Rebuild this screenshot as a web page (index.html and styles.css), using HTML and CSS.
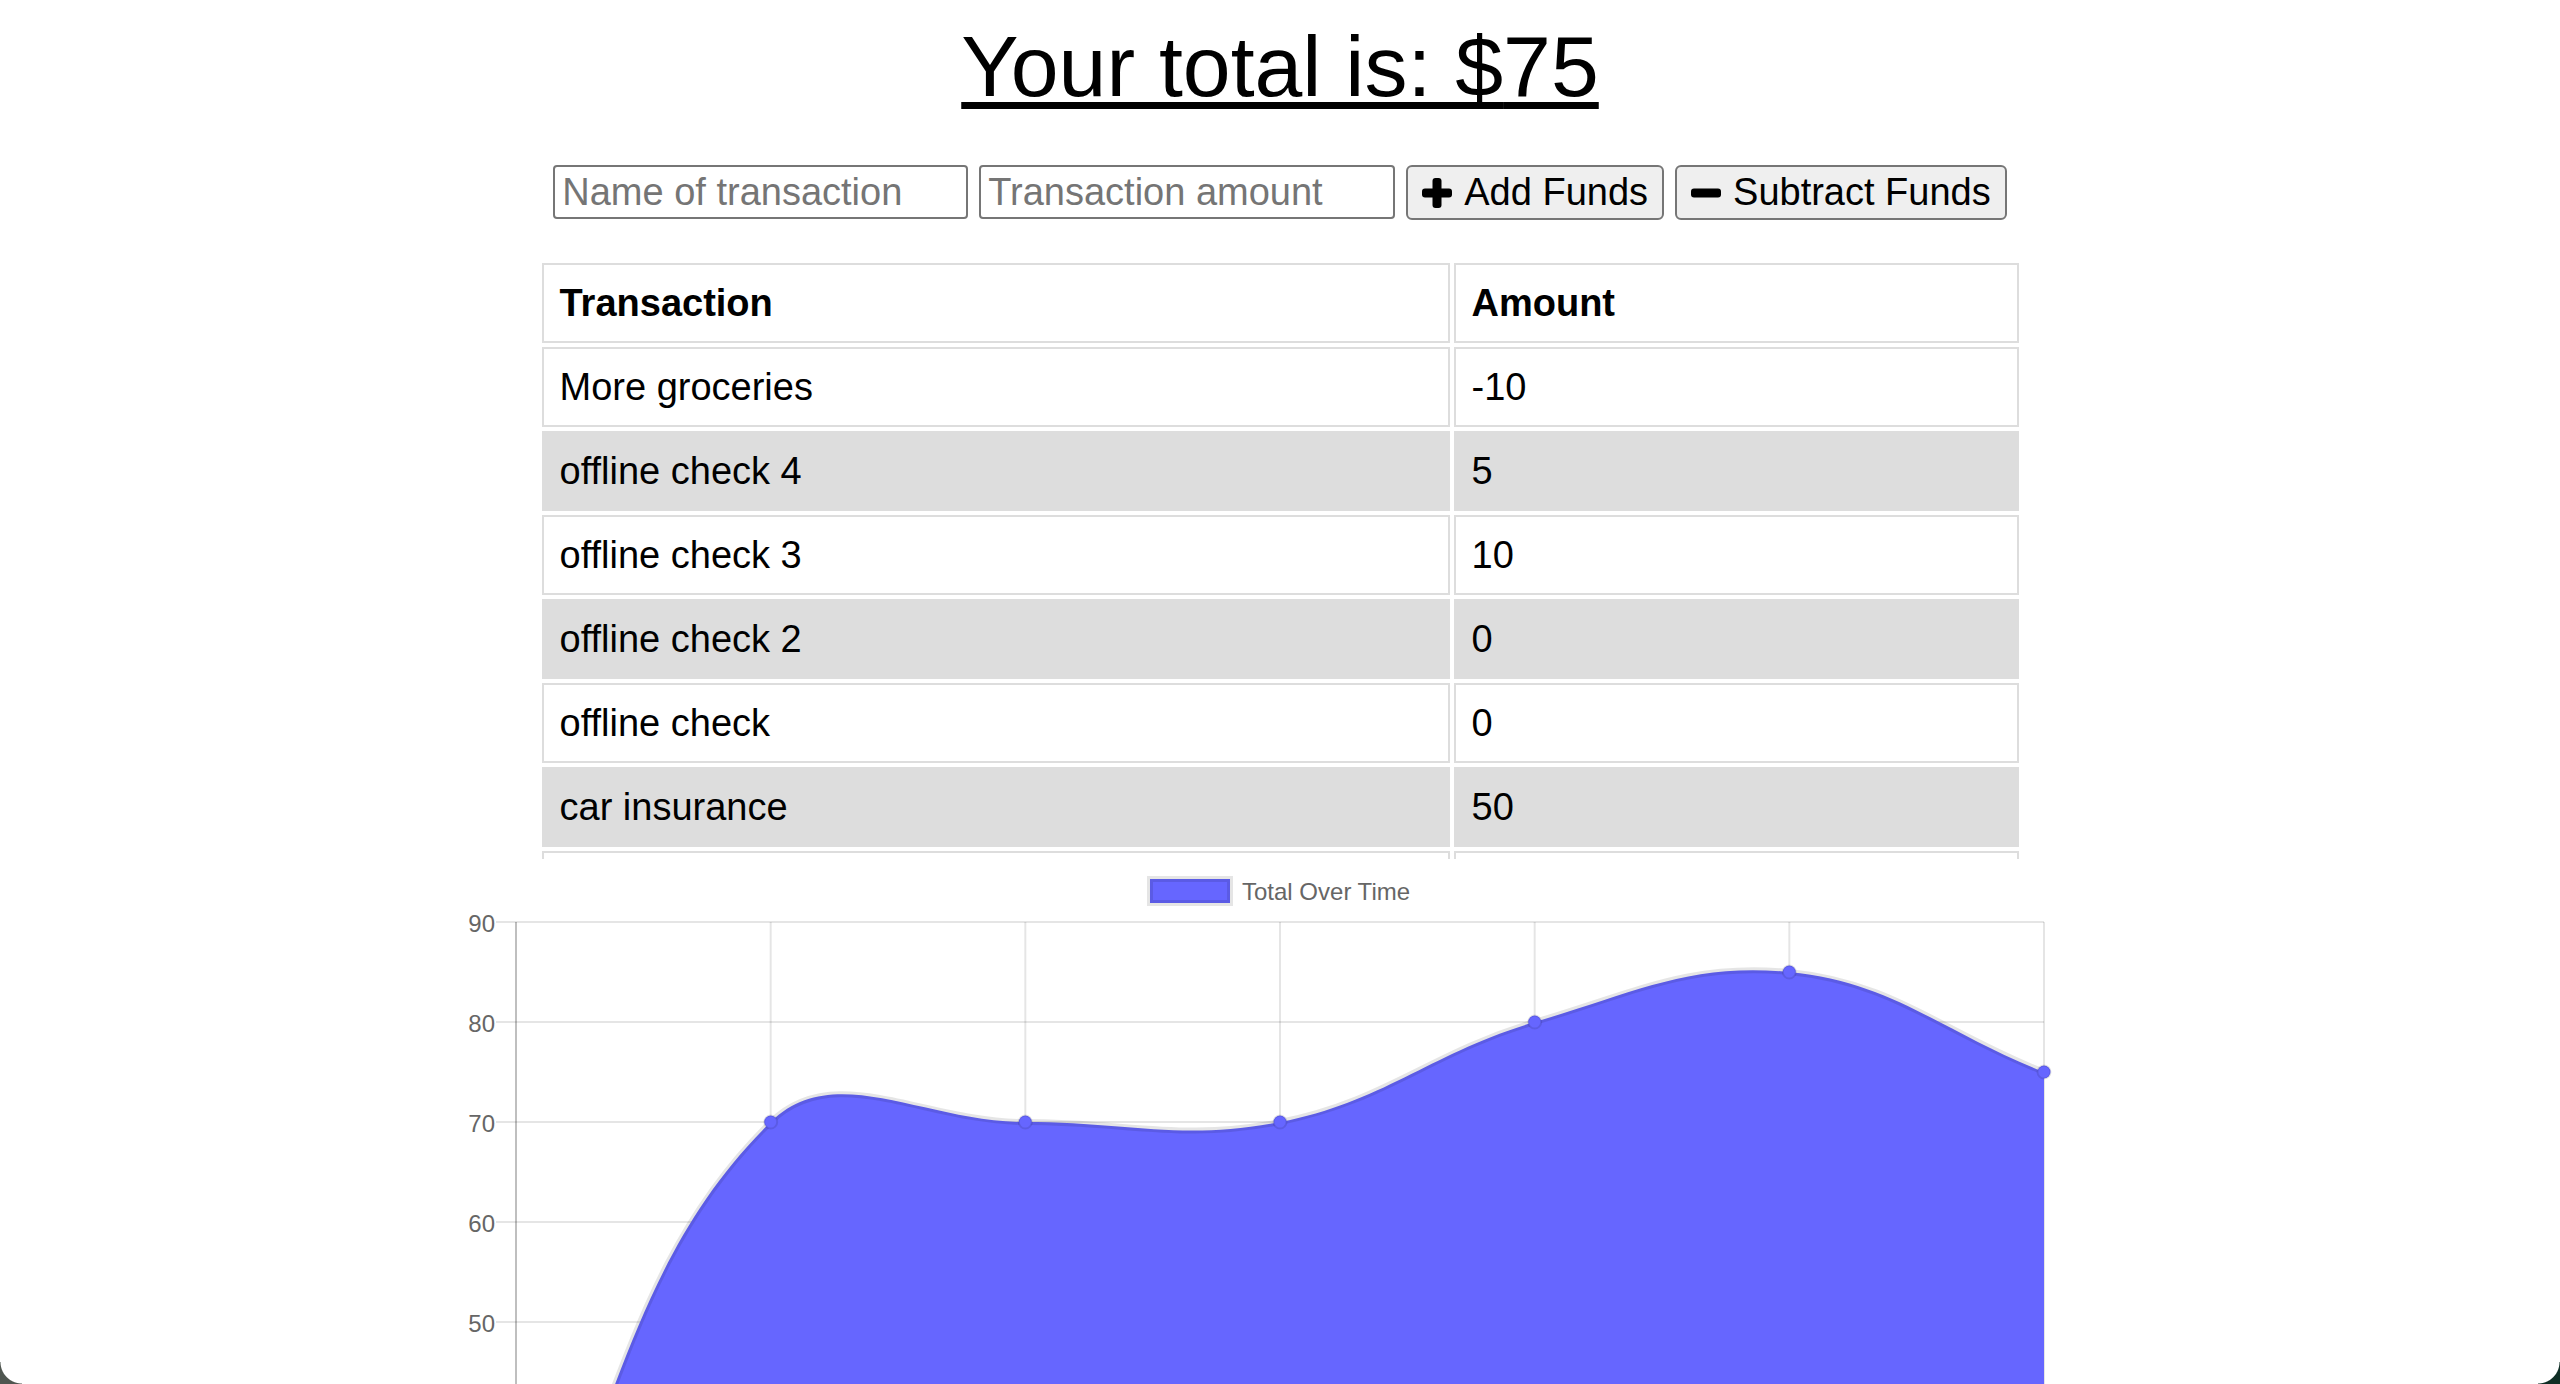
FILE: index.html
```html
<!DOCTYPE html>
<html lang="en">
<head>
<meta charset="utf-8">
<title>Budget Tracker</title>
<link rel="stylesheet" href="styles.css">
</head>
<body>
  <h1 class="total">Your total is: $<span class="total-amount">75</span></h1>

  <div class="controls">
    <input class="field field-name" type="text" placeholder="Name of transaction">
    <input class="field field-amount" type="number" placeholder="Transaction amount">
    <button class="btn btn-add" type="button">
      <svg class="btn-icon" viewBox="0 0 30 30" aria-hidden="true"><rect x="10.5" y="0" width="9" height="30" rx="3"/><rect x="0" y="10.5" width="30" height="9" rx="3"/></svg>
      <span>Add Funds</span>
    </button>
    <button class="btn btn-sub" type="button">
      <svg class="btn-icon" viewBox="0 0 30 30" aria-hidden="true"><rect x="0" y="10.5" width="30" height="9" rx="3"/></svg>
      <span>Subtract Funds</span>
    </button>
  </div>

  <div class="table-wrap">
    <table class="tx-table">
      <thead>
        <tr><th class="col-name">Transaction</th><th class="col-amount">Amount</th></tr>
      </thead>
      <tbody>
        <tr><td>More groceries</td><td>-10</td></tr>
        <tr><td>offline check 4</td><td>5</td></tr>
        <tr><td>offline check 3</td><td>10</td></tr>
        <tr><td>offline check 2</td><td>0</td></tr>
        <tr><td>offline check</td><td>0</td></tr>
        <tr><td>car insurance</td><td>50</td></tr>
        <tr><td>&nbsp;</td><td>&nbsp;</td></tr>
      </tbody>
    </table>
  </div>

  <svg class="chart" width="1720" height="525" viewBox="420 859 1720 525" aria-label="Total Over Time chart">
    <g class="legend">
      <rect x="1150" y="879" width="80" height="24" class="legend-box"/>
      <text x="1242" y="891" class="legend-text">Total Over Time</text>
    </g>
    <g class="grid">
      <line x1="496" y1="922" x2="2044" y2="922"/>
      <line x1="496" y1="1022" x2="2044" y2="1022"/>
      <line x1="496" y1="1122" x2="2044" y2="1122"/>
      <line x1="496" y1="1222" x2="2044" y2="1222"/>
      <line x1="496" y1="1322" x2="2044" y2="1322"/>
      <line x1="496" y1="1422" x2="2044" y2="1422"/>
      <line x1="770.67" y1="922" x2="770.67" y2="1642"/>
      <line x1="1025.33" y1="922" x2="1025.33" y2="1642"/>
      <line x1="1280" y1="922" x2="1280" y2="1642"/>
      <line x1="1534.67" y1="922" x2="1534.67" y2="1642"/>
      <line x1="1789.33" y1="922" x2="1789.33" y2="1642"/>
      <line x1="2044" y1="922" x2="2044" y2="1642"/>
    </g>
    <line class="zero-line" x1="516" y1="922" x2="516" y2="1642"/>
    <g class="y-labels">
      <text x="495" y="923">90</text>
      <text x="495" y="1023">80</text>
      <text x="495" y="1123">70</text>
      <text x="495" y="1223">60</text>
      <text x="495" y="1323">50</text>
    </g>
    <path class="area" d="M516,1622 C617.9,1422 630.6,1259.6 770.7,1122 C834.3,1059.6 923.4,1122 1025.3,1122 C1127.2,1122 1181.8,1141.3 1280,1122 C1385.5,1101.3 1430.1,1052.8 1534.7,1022 C1633.9,992.8 1690.1,962.3 1789.3,972 C1893.9,982.3 1942.1,1032 2044,1072 L2044,1622 L516,1622 Z"/>
    <path class="area-line" d="M516,1622 C617.9,1422 630.6,1259.6 770.7,1122 C834.3,1059.6 923.4,1122 1025.3,1122 C1127.2,1122 1181.8,1141.3 1280,1122 C1385.5,1101.3 1430.1,1052.8 1534.7,1022 C1633.9,992.8 1690.1,962.3 1789.3,972 C1893.9,982.3 1942.1,1032 2044,1072"/>
    <g class="points">
      <circle cx="770.7" cy="1122" r="6.5"/>
      <circle cx="1025.3" cy="1122" r="6.5"/>
      <circle cx="1280" cy="1122" r="6.5"/>
      <circle cx="1534.7" cy="1022" r="6.5"/>
      <circle cx="1789.3" cy="972" r="6.5"/>
      <circle cx="2044" cy="1072" r="6.5"/>
    </g>
  </svg>
</body>
</html>
```

FILE: styles.css
```css
html, body {
  margin: 0;
  padding: 0;
  overflow: hidden;
  background: #ffffff;
}

body {
  font-family: "Liberation Sans", Arial, Helvetica, sans-serif;
  color: #000000;
}

body::before,
body::after {
  content: "";
  position: fixed;
  bottom: 0;
  width: 22px;
  height: 22px;
  z-index: 10;
}

body::before {
  left: 0;
  background: radial-gradient(circle at 22px 0, transparent 21px, #4f5650 22px);
}

body::after {
  right: 0;
  background: radial-gradient(circle at 0 0, transparent 21px, #0f2e25 22px);
}

.total {
  margin: 17px 0 0;
  font-size: 86px;
  font-weight: normal;
  line-height: normal;
  text-align: center;
  text-decoration: underline;
  text-decoration-thickness: 7px;
  text-underline-offset: 6px;
}

.controls {
  display: flex;
  justify-content: center;
  align-items: flex-start;
  gap: 11px;
  margin-top: 49px;
}

.field {
  box-sizing: border-box;
  height: 54px;
  border: 2px solid #767676;
  border-radius: 4px;
  padding: 0 7px;
  font-family: "Liberation Sans", Arial, sans-serif;
  font-size: 38px;
  color: #000;
  background: #fff;
  -moz-appearance: textfield;
}

.field::-webkit-outer-spin-button,
.field::-webkit-inner-spin-button {
  -webkit-appearance: none;
  margin: 0;
}

.field::placeholder {
  color: #757575;
}

.field-name {
  width: 415px;
}

.field-amount {
  width: 416px;
}

.btn {
  box-sizing: border-box;
  display: inline-flex;
  align-items: center;
  gap: 12px;
  height: 55px;
  padding: 0 14px;
  border: 2px solid #767676;
  border-radius: 6px;
  background: #efefef;
  font-family: "Liberation Sans", Arial, sans-serif;
  font-size: 38px;
  color: #000;
}

.btn-icon {
  width: 30px;
  height: 30px;
  fill: #000;
  flex: none;
}

.table-wrap {
  width: 1485px;
  height: 600px;
  margin: 39px auto 0;
  overflow: hidden;
}

.tx-table {
  width: 1485px;
  table-layout: fixed;
  border-collapse: separate;
  border-spacing: 4px;
  font-size: 38px;
}

.tx-table th,
.tx-table td {
  box-sizing: border-box;
  border: 2px solid #dddddd;
  padding: 16px 15px 16px 16px;
  line-height: 44px;
  text-align: left;
  white-space: nowrap;
}

.tx-table th {
  font-weight: bold;
}

.col-name {
  width: 908px;
}

.col-amount {
  width: 565px;
}

.tx-table tbody tr:nth-child(even) td {
  background: #dddddd;
}

.chart {
  display: block;
  margin: 0 auto;
  overflow: hidden;
}

.legend-box {
  fill: #6666ff;
  stroke: rgba(0, 0, 0, 0.1);
  stroke-width: 6;
}

.legend-text {
  font-family: "Liberation Sans", Arial, sans-serif;
  font-size: 24px;
  fill: #666666;
  dominant-baseline: central;
}

.grid line {
  stroke: rgba(0, 0, 0, 0.1);
  stroke-width: 2;
}

.zero-line {
  stroke: rgba(0, 0, 0, 0.25);
  stroke-width: 2;
}

.y-labels text {
  font-family: "Liberation Sans", Arial, sans-serif;
  font-size: 24px;
  fill: #666666;
  text-anchor: end;
  dominant-baseline: central;
}

.area {
  fill: #6666ff;
}

.area-line {
  fill: none;
  stroke: rgba(0, 0, 0, 0.1);
  stroke-width: 6;
}

.points circle {
  fill: #6666ff;
  stroke: rgba(0, 0, 0, 0.1);
  stroke-width: 2;
}
```
